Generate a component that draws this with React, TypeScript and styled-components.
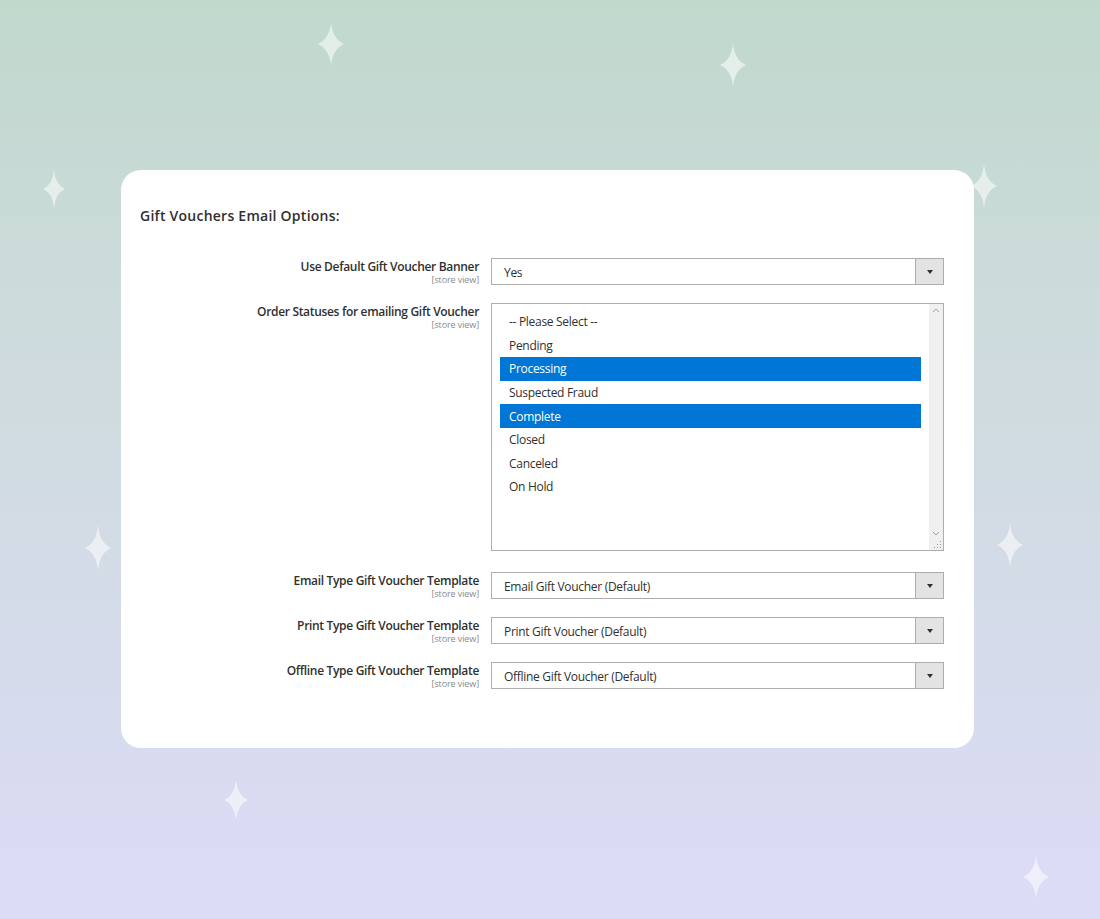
import React from 'react';
import styled, { createGlobalStyle } from 'styled-components';

const GlobalStyle = createGlobalStyle`
  html, body {
    margin: 0;
    padding: 0;
  }
  body {
    font-family: 'Open Sans', 'Noto Sans', sans-serif;
    color: #303030;
  }
  * {
    box-sizing: border-box;
  }
`;

const Page = styled.div`
  position: relative;
  width: 1100px;
  height: 919px;
  overflow: hidden;
  background: linear-gradient(180deg, #c1d9cd 0%, #d0dbe0 45%, #dcdcf7 100%);
  padding: 170px 0 0 121px;
`;

const Sparkle = styled.svg`
  position: absolute;
  fill: rgba(255, 255, 255, 0.55);
`;

const Card = styled.div`
  position: relative;
  width: 853px;
  height: 578px;
  background: #fff;
  border-radius: 20px;
  padding: 36px 30px 0 19px;
`;

const Title = styled.h2`
  margin: 0 0 32px;
  font-size: 14px;
  line-height: 20px;
  font-weight: 600;
  color: #303030;
  letter-spacing: 0.25px;
`;

const Form = styled.div`
  display: flex;
  flex-direction: column;
  gap: 18px;
`;

const FieldRow = styled.div<{ $extraTop?: number }>`
  display: grid;
  grid-template-columns: 339px 453px;
  column-gap: 12px;
  margin-top: ${(p) => p.$extraTop ?? 0}px;
`;

const LabelCol = styled.div`
  text-align: right;
  padding-top: 2px;
`;

const LabelText = styled.div`
  font-size: 12px;
  line-height: 14px;
  font-weight: 600;
  color: #303030;
  letter-spacing: -0.32px;
`;

const Scope = styled.div`
  font-size: 9px;
  line-height: 11px;
  color: #8a8a8a;
  letter-spacing: -0.1px;
`;

const SelectBox = styled.div`
  display: flex;
  height: 27px;
  border: 1px solid #adadad;
  background: #fff;
`;

const SelectValue = styled.div`
  flex: 1;
  display: flex;
  align-items: center;
  padding: 1px 0 0 12px;
  font-size: 12px;
  color: #303030;
  letter-spacing: -0.3px;
`;

const ArrowBtn = styled.div`
  width: 28px;
  border-left: 1px solid #adadad;
  background: #e3e3e3;
  display: flex;
  align-items: center;
  justify-content: center;
  &::after {
    content: '';
    border-left: 3.5px solid transparent;
    border-right: 3.5px solid transparent;
    border-top: 4px solid #303030;
  }
`;

const MultiBox = styled.div`
  position: relative;
  display: flex;
  height: 248px;
  border: 1px solid #adadad;
  background: #fff;
`;

const OptionList = styled.div`
  flex: 1;
  padding: 6px 8px 0 8px;
`;

const Option = styled.div<{ $selected?: boolean }>`
  height: 23.6px;
  display: flex;
  align-items: center;
  padding-left: 9px;
  font-size: 12px;
  letter-spacing: -0.3px;
  color: ${(p) => (p.$selected ? '#fff' : '#303030')};
  background: ${(p) => (p.$selected ? '#0077d6' : 'transparent')};
`;

const Scrollbar = styled.div`
  width: 14px;
  display: flex;
  flex-direction: column;
  justify-content: space-between;
  align-items: center;
  background: #f0f0f0;
  padding: 4px 0 14px;
  svg {
    display: block;
  }
`;

const Grip = styled.svg`
  position: absolute;
  right: 1px;
  bottom: 1px;
`;

const sparkles = [
  { x: 331, y: 44, w: 26, h: 44 },
  { x: 733, y: 65, w: 26, h: 44 },
  { x: 54, y: 189, w: 22, h: 38 },
  { x: 984, y: 186, w: 26, h: 44 },
  { x: 98, y: 548, w: 26, h: 46 },
  { x: 1010, y: 545, w: 26, h: 44 },
  { x: 236, y: 800, w: 24, h: 40 },
  { x: 1036, y: 877, w: 26, h: 44 },
];

const options = [
  { label: '-- Please Select --' },
  { label: 'Pending' },
  { label: 'Processing', selected: true },
  { label: 'Suspected Fraud' },
  { label: 'Complete', selected: true },
  { label: 'Closed' },
  { label: 'Canceled' },
  { label: 'On Hold' },
];

const Label = ({ text }: { text: string }) => (
  <LabelCol>
    <LabelText>{text}</LabelText>
    <Scope>[store view]</Scope>
  </LabelCol>
);

const Select = ({ value }: { value: string }) => (
  <SelectBox>
    <SelectValue>{value}</SelectValue>
    <ArrowBtn />
  </SelectBox>
);

const App: React.FC = () => {
  return (
    <Page>
      <GlobalStyle />
      {sparkles.map((s, i) => (
        <Sparkle
          key={i}
          width={s.w}
          height={s.h}
          viewBox="0 0 26 44"
          preserveAspectRatio="none"
          style={{ left: s.x - s.w / 2, top: s.y - s.h / 2 }}
        >
          <path d="M13 0 Q14.5 17 26 22 Q14.5 27 13 44 Q11.5 27 0 22 Q11.5 17 13 0Z" />
        </Sparkle>
      ))}
      <Card>
        <Title>Gift Vouchers Email Options:</Title>
        <Form>
          <FieldRow>
            <Label text="Use Default Gift Voucher Banner" />
            <Select value="Yes" />
          </FieldRow>
          <FieldRow>
            <Label text="Order Statuses for emailing Gift Voucher" />
            <MultiBox>
              <OptionList>
                {options.map((o) => (
                  <Option key={o.label} $selected={o.selected}>
                    {o.label}
                  </Option>
                ))}
              </OptionList>
              <Scrollbar>
                <svg width="8" height="5" viewBox="0 0 8 5">
                  <path d="M1 4 L4 1 L7 4" fill="none" stroke="#a0a0a0" strokeWidth="1" />
                </svg>
                <svg width="8" height="5" viewBox="0 0 8 5">
                  <path d="M1 1 L4 4 L7 1" fill="none" stroke="#a0a0a0" strokeWidth="1" />
                </svg>
              </Scrollbar>
              <Grip width="9" height="9" viewBox="0 0 9 9">
                <g fill="#9a9a9a">
                  <rect x="7" y="1" width="1" height="1" />
                  <rect x="4" y="4" width="1" height="1" />
                  <rect x="7" y="4" width="1" height="1" />
                  <rect x="1" y="7" width="1" height="1" />
                  <rect x="4" y="7" width="1" height="1" />
                  <rect x="7" y="7" width="1" height="1" />
                </g>
              </Grip>
            </MultiBox>
          </FieldRow>
          <FieldRow $extraTop={3}>
            <Label text="Email Type Gift Voucher Template" />
            <Select value="Email Gift Voucher (Default)" />
          </FieldRow>
          <FieldRow>
            <Label text="Print Type Gift Voucher Template" />
            <Select value="Print Gift Voucher (Default)" />
          </FieldRow>
          <FieldRow>
            <Label text="Offline Type Gift Voucher Template" />
            <Select value="Offline Gift Voucher (Default)" />
          </FieldRow>
        </Form>
      </Card>
    </Page>
  );
};

export default App;
